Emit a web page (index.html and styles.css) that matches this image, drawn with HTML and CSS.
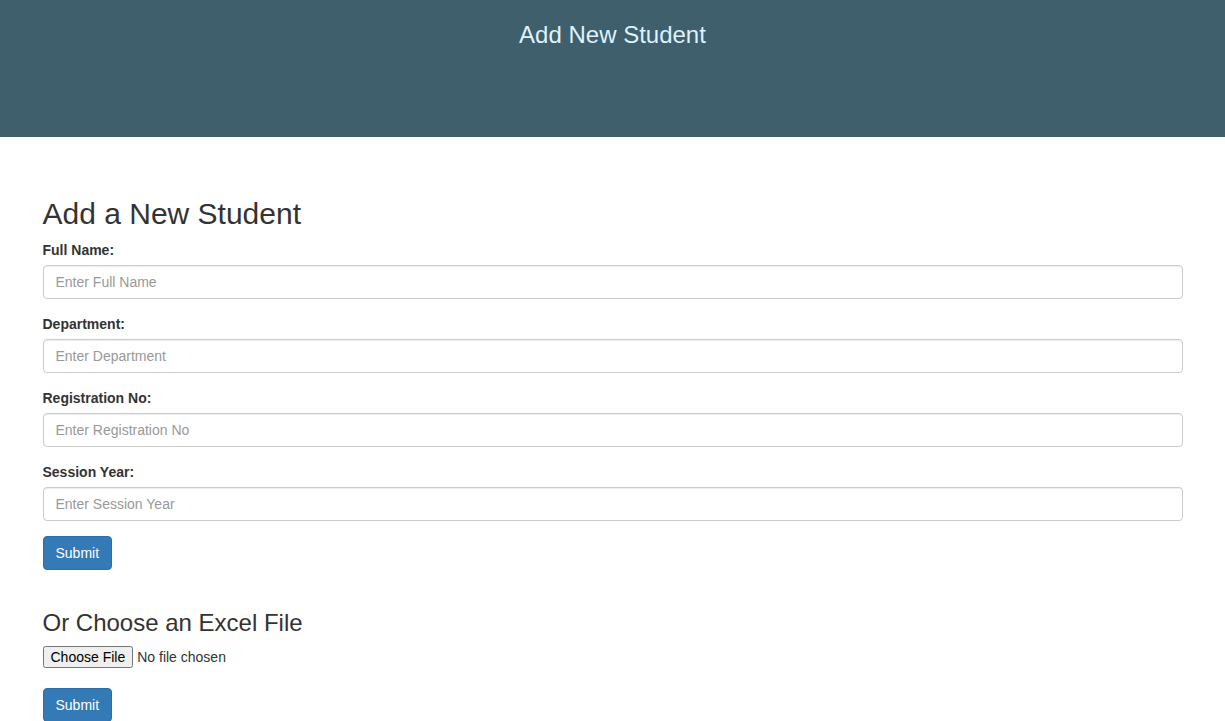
FILE: index.html
```html
<!DOCTYPE html>
<html>
<head>
<meta charset="utf-8">
<title>Add New Student</title>
<link rel="stylesheet" href="styles.css">
</head>
<body>
<header class="topbar">
  <h3 class="topbar-title">Add New Student</h3>
</header>
<main class="container">
  <form class="student-form">
    <h2 class="page-title">Add a New Student</h2>
    <div class="form-group">
      <label class="field-label" for="name">Full Name:</label>
      <input class="form-control" id="name" type="text" placeholder="Enter Full Name">
    </div>
    <div class="form-group">
      <label class="field-label" for="dept">Department:</label>
      <input class="form-control" id="dept" type="text" placeholder="Enter Department">
    </div>
    <div class="form-group">
      <label class="field-label" for="reg">Registration No:</label>
      <input class="form-control" id="reg" type="text" placeholder="Enter Registration No">
    </div>
    <div class="form-group">
      <label class="field-label" for="session">Session Year:</label>
      <input class="form-control" id="session" type="text" placeholder="Enter Session Year">
    </div>
    <button type="button" class="btn">Submit</button>
  </form>
  <form class="excel-form">
    <h3 class="section-title">Or Choose an Excel File</h3>
    <div class="form-group file-group">
      <input class="file-input" type="file">
    </div>
    <button type="button" class="btn">Submit</button>
  </form>
</main>
</body>
</html>
```

FILE: styles.css
```css
* { box-sizing: border-box; }
html, body { margin: 0; padding: 0; }
body {
  font-family: "Liberation Sans", Arial, Helvetica, sans-serif;
  font-size: 14px;
  line-height: 1.42857;
  color: #333;
  background: #fff;
}
.topbar {
  height: 137px;
  background: #3e5f6b;
  text-align: center;
  padding-top: 22px;
}
.topbar-title {
  margin: 0;
  font-size: 24px;
  font-weight: 400;
  line-height: 1.1;
  color: #dff2fd;
}
.container {
  width: 1170px;
  margin: 0 auto;
  padding: 0 15px;
}
.student-form { padding-top: 40px; }
.page-title {
  margin: 20px 0 10px;
  font-size: 30px;
  font-weight: 400;
  line-height: 1.1;
  color: #333;
}
.form-group { margin-bottom: 15px; }
.field-label {
  display: inline-block;
  max-width: 100%;
  padding-top: 1px;
  margin-bottom: 4px;
  font-weight: 700;
}
.form-control {
  display: block;
  width: 100%;
  height: 34px;
  padding: 6px 12px;
  font: inherit;
  line-height: 1.42857;
  color: #555;
  background: #fff;
  border: 1px solid #ccc;
  border-radius: 4px;
  box-shadow: inset 0 1px 1px rgba(0,0,0,.075);
  margin: 0;
}
.form-control::placeholder { color: #999; opacity: 1; }
.btn {
  display: inline-block;
  padding: 7px 12px 5px;
  margin: 0;
  font: inherit;
  font-size: 14px;
  line-height: 1.42857;
  color: #fff;
  background: #337ab7;
  border: 1px solid #2e6da4;
  border-radius: 4px;
  cursor: pointer;
}
.excel-form { padding-top: 20px; }
.section-title {
  margin: 20px 0 10px;
  font-size: 24px;
  font-weight: 400;
  line-height: 1.1;
  color: #333;
}
.file-group { margin-bottom: 20px; }
.file-input {
  display: block;
  font: inherit;
  font-size: 14px;
  margin: 0;
  color: #333;
}
```
